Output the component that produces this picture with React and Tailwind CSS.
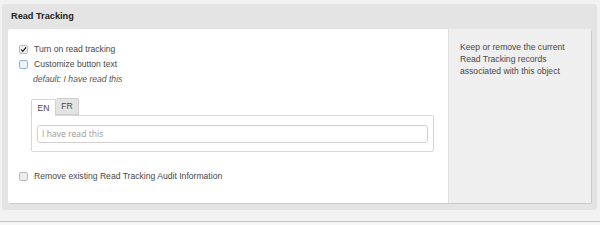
import React from "react";

const Box = ({ checked, focus }) => (
  <span
    className={`flex items-center justify-center w-[9px] h-[9px] shrink-0 rounded-[2px] border ${
      focus ? "border-[#8fb4dc] bg-[#eef3f9]" : "border-[#bcbcbc] bg-[#ededed]"
    }`}
  >
    {checked && (
      <svg viewBox="0 0 10 10" className="w-[7px] h-[7px]">
        <path d="M1.5 5.2 L4 7.6 L8.6 2" fill="none" stroke="#222" strokeWidth="1.8" />
      </svg>
    )}
  </span>
);

const CheckRow = ({ label, checked, focus }) => (
  <div className="flex items-center h-[15px] pl-[11px] gap-[6px]">
    <Box checked={checked} focus={focus} />
    <span>{label}</span>
  </div>
);

export default function App() {
  return (
    <div
      className="w-[600px] h-[225px] flex flex-col bg-[#f2f2f2] text-[#484848] text-[8.6px] overflow-hidden"
      style={{ fontFamily: '"Liberation Sans", Arial, sans-serif' }}
    >
      <div className="mt-[4px] ml-[2px] mr-[3px] h-[206px] flex flex-col rounded-[3px] bg-[#e4e4e4] px-[6px] pb-[7px]">
        <div className="h-[25px] flex items-center pl-[3px] font-bold text-[9.2px] text-[#222]">
          Read Tracking
        </div>
        <div className="flex-1 flex bg-white rounded-[2px] shadow-[1px_1px_0_#cbcbcb]">
          <div className="w-[440px] pt-[13px]">
            <CheckRow label="Turn on read tracking" checked />
            <CheckRow label="Customize button text" focus />
            <div className="h-[15px] flex items-center pl-[25px] italic text-[#555]">
              default: I have read this
            </div>
            <div className="ml-[23px] mt-[11px] w-[403px]">
              <div className="flex h-[17px]">
                <div className="w-[25px] flex items-center justify-center bg-white border border-b-0 border-[#d2d2d2] rounded-t-[2px] relative top-[1px]">
                  EN
                </div>
                <div className="w-[23px] flex items-center justify-center bg-[#e3e3e3] border border-l-0 border-[#cfcfcf] rounded-t-[2px]">
                  FR
                </div>
              </div>
              <div className="border border-[#d8d8d8] rounded-b-[2px] rounded-tr-[2px] pt-[9px] pb-[8px] px-[5px]">
                <div
                  className="h-[18px] border border-[#cfcfcf] rounded-[3px] flex items-center pl-[4px] text-[#999] text-[8.6px]"
                  style={{ fontFamily: '"Open Sans", sans-serif' }}
                >
                  I have read this
                </div>
              </div>
            </div>
            <div className="mt-[17px]">
              <CheckRow label="Remove existing Read Tracking Audit Information" />
            </div>
          </div>
          <div className="flex-1 bg-[#efefef] border-l border-[#e2e2e2] pt-[12px] pl-[11px] leading-[12px]">
            Keep or remove the current
            <br />
            Read Tracking records
            <br />
            associated with this object
          </div>
        </div>
      </div>
      <div className="h-[11px]" />
      <div className="h-[1px] bg-[#c4c4c4]" />
      <div className="flex-1 bg-[#f7f7f7]" />
    </div>
  );
}
